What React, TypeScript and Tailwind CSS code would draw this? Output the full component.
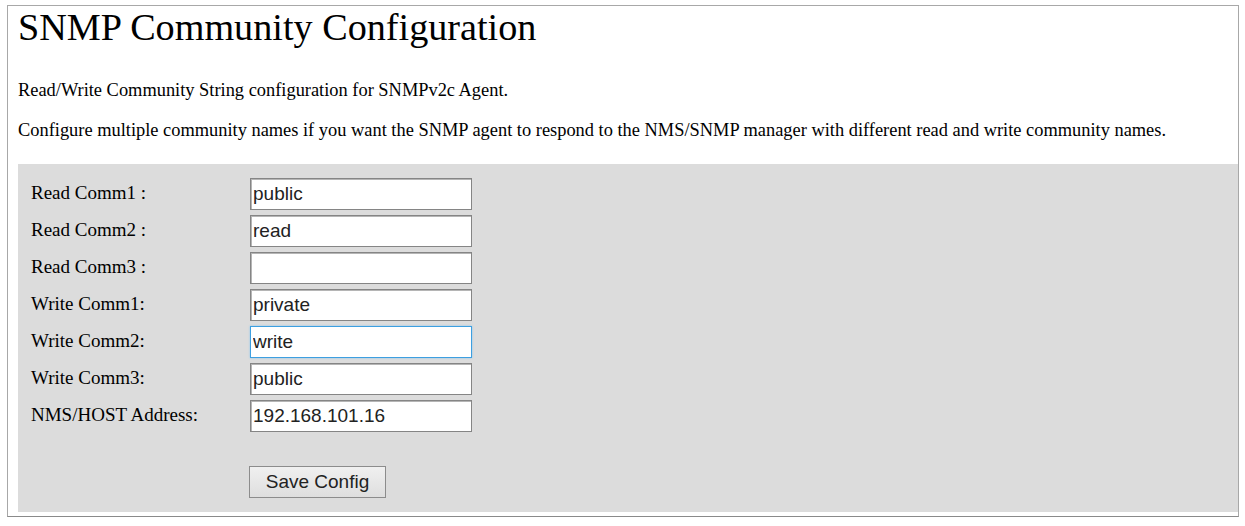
import React from 'react';

const rows = [
  { label: 'Read Comm1 :', value: 'public' },
  { label: 'Read Comm2 :', value: 'read' },
  { label: 'Read Comm3 :', value: '' },
  { label: 'Write Comm1:', value: 'private' },
  { label: 'Write Comm2:', value: 'write', focused: true },
  { label: 'Write Comm3:', value: 'public' },
  { label: 'NMS/HOST Address:', value: '192.168.101.16' },
];

export default function App() {
  return (
    <div className="w-[1245px] h-[526px] bg-white pt-[5px] pl-[7px] font-['Liberation_Serif',serif] text-black">
      <div className="w-[1232px] h-[512px] border border-[#a8a8a8] border-b-[#8a8a8a] flex flex-col pl-[10px]">
        <h1 className="mt-[2px] text-[38.2px] leading-[38px] font-normal">SNMP Community Configuration</h1>
        <p className="mt-[33px] text-[18.4px] leading-[22px]">
          Read/Write Community String configuration for SNMPv2c Agent.
        </p>
        <p className="mt-[18px] text-[18.4px] leading-[22px]">
          Configure multiple community names if you want the SNMP agent to respond to the NMS/SNMP manager with
          different read and write community names.
        </p>
        <div className="mt-[23px] h-[348px] bg-[#dcdcdc] pt-[14px] pl-[13px]">
          <div className="grid grid-cols-[219px_222px] gap-y-[5px]">
            {rows.map((r) => (
              <React.Fragment key={r.label}>
                <div className="pt-[4px] text-[19px] leading-[22px]">{r.label}</div>
                <input
                  type="text"
                  defaultValue={r.value}
                  className={
                    r.focused
                      ? "h-[32px] w-[222px] bg-white border border-[#3d9fe0] shadow-[0_0_2px_#8cc8f0] pl-[2px] outline-none text-[19px] text-[#222] font-['Liberation_Sans',Arial,sans-serif]"
                      : "h-[32px] w-[222px] bg-white border border-[#858585] shadow-[inset_1px_1px_0_#b5b5b5] pl-[2px] outline-none text-[19px] text-[#222] font-['Liberation_Sans',Arial,sans-serif]"
                  }
                />
              </React.Fragment>
            ))}
          </div>
          <div className="mt-[34px] pl-[218px]">
            <button
              type="button"
              className="h-[32px] w-[137px] bg-[linear-gradient(#f0f0f0,#dedede)] border border-[#8c8c8c] text-[19px] text-[#222] font-['Liberation_Sans',Arial,sans-serif]"
            >
              Save Config
            </button>
          </div>
        </div>
      </div>
    </div>
  );
}
